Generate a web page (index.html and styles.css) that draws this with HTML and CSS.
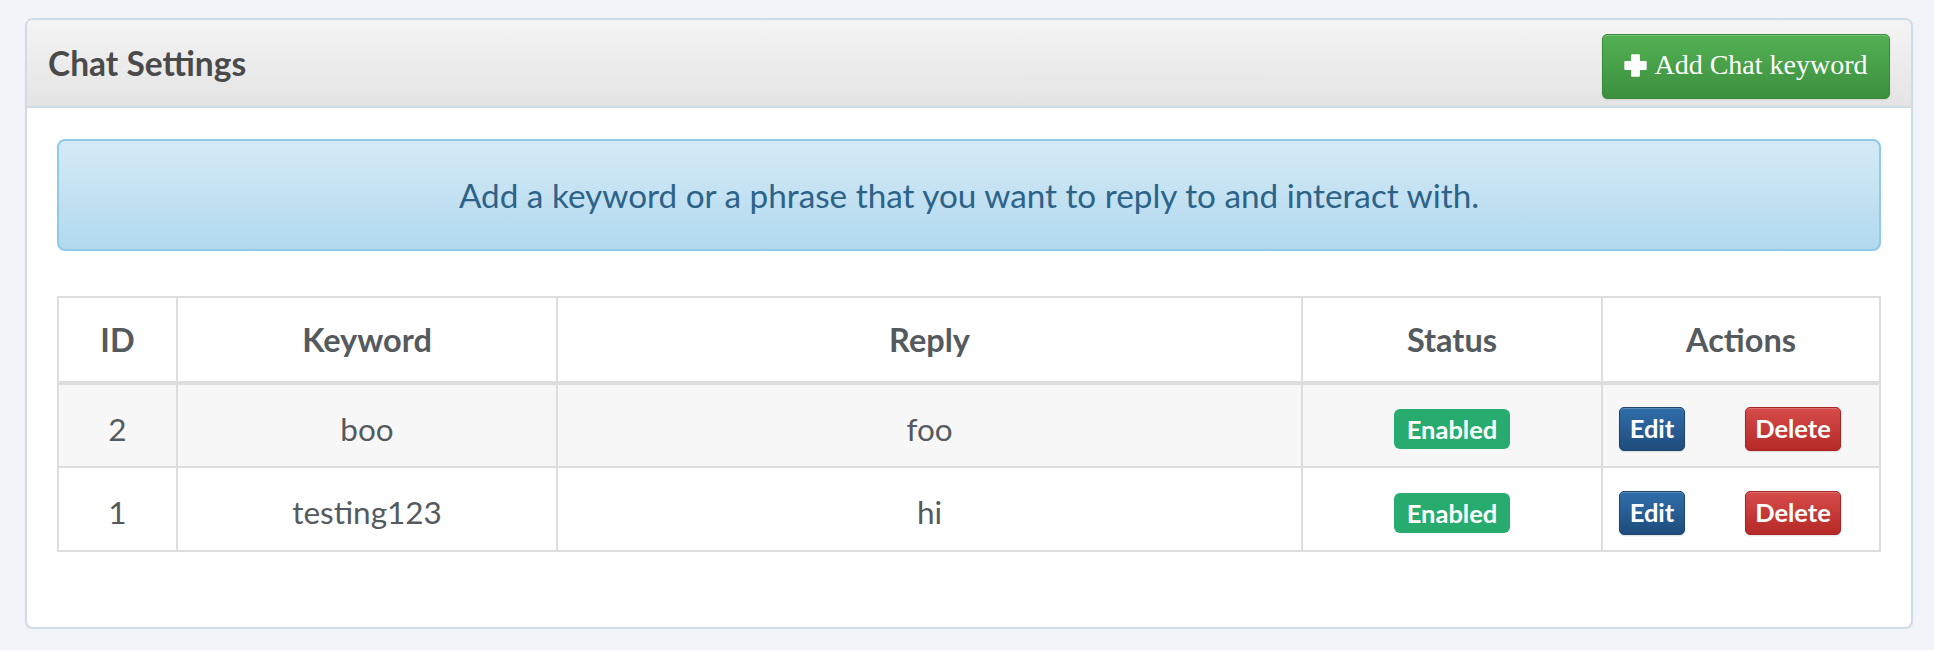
FILE: index.html
```html
<!DOCTYPE html>
<html lang="en">
<head>
<meta charset="utf-8">
<title>Chat Settings</title>
<link rel="stylesheet" href="styles.css">
</head>
<body>
<div class="panel">
  <div class="panel-header">
    <h2 class="panel-title">Chat Settings</h2>
    <button class="btn-add" type="button">
      <svg class="plus" viewBox="0 0 22 22" width="23" height="23" aria-hidden="true">
        <path d="M7.5 1h7v6.5H21v7h-6.5V21h-7v-6.5H1v-7h6.5z" fill="#fff" stroke="#fff" stroke-width="1.4" stroke-linejoin="round"/>
      </svg>
      <span>Add Chat keyword</span>
    </button>
  </div>
  <div class="panel-body">
    <div class="alert">Add a keyword or a phrase that you want to reply to and interact with.</div>
    <table class="kw-table">
      <thead>
        <tr>
          <th class="col-id">ID</th>
          <th class="col-kw">Keyword</th>
          <th class="col-reply">Reply</th>
          <th class="col-status">Status</th>
          <th class="col-actions">Actions</th>
        </tr>
      </thead>
      <tbody>
        <tr class="striped">
          <td>2</td>
          <td>boo</td>
          <td>foo</td>
          <td><span class="label-ok">Enabled</span></td>
          <td class="actions"><button class="btn btn-edit" type="button">Edit</button><button class="btn btn-delete" type="button">Delete</button></td>
        </tr>
        <tr>
          <td>1</td>
          <td>testing123</td>
          <td>hi</td>
          <td><span class="label-ok">Enabled</span></td>
          <td class="actions"><button class="btn btn-edit" type="button">Edit</button><button class="btn btn-delete" type="button">Delete</button></td>
        </tr>
      </tbody>
    </table>
  </div>
</div>
</body>
</html>
```
FILE: styles.css
```css
* { box-sizing: border-box; }

html, body {
  margin: 0;
  background: #f1f5f9;
}

body {
  padding: 18px 21px 0 25px;
  font-family: Lato, "Open Sans", "DejaVu Sans", sans-serif;
  color: #555;
}

.panel {
  background: #fff;
  border: 2px solid #cfdce8;
  border-radius: 8px;
  box-shadow: 0 2px 3px rgba(0, 0, 0, 0.04);
  height: 611px;
  overflow: hidden;
}

.panel-header {
  height: 88px;
  display: flex;
  align-items: center;
  justify-content: space-between;
  padding: 0 21px 0 21px;
  background: linear-gradient(#f4f4f4, #e4e4e4);
  border-bottom: 2px solid #cfdce8;
}

.panel-title {
  margin: 0;
  font-size: 33.5px;
  font-weight: 700;
  color: #4a4a4a;
}

.btn-add {
  margin-top: 7px;
  width: 288px;
  height: 65px;
  display: flex;
  align-items: center;
  justify-content: center;
  gap: 7px;
  padding: 0 0 4px 0;
  background: linear-gradient(#53b154, #3c8f3d);
  border: 1px solid #3b8a3c;
  border-radius: 5px;
  box-shadow: inset 0 1px 0 rgba(255, 255, 255, 0.2), 0 1px 2px rgba(0, 0, 0, 0.1);
  color: #fff;
  font-family: "Liberation Serif", "Times New Roman", serif;
  font-size: 28px;
}

.btn-add .plus {
  flex: none;
  margin-top: 1px;
}

.panel-body {
  padding: 31px 30px;
}

.alert {
  height: 112px;
  display: flex;
  align-items: center;
  justify-content: center;
  background: linear-gradient(#d4eaf6, #b2d9ee);
  border: 2px solid #8fcbe8;
  border-radius: 8px;
  color: #2d6388;
  font-size: 33.3px;
  margin-bottom: 45px;
}

.kw-table {
  width: 100%;
  border-collapse: collapse;
  border: 2px solid #dddddd;
  font-size: 31.5px;
  color: #555a5e;
}

.kw-table th,
.kw-table td {
  border: 2px solid #dddddd;
  text-align: center;
  vertical-align: middle;
  padding: 0;
}

.kw-table th {
  height: 86px;
  font-weight: 700;
  font-size: 32.5px;
  border-bottom-width: 4px;
}

.kw-table td {
  height: 84px;
  padding-top: 6px;
}

.col-id { width: 119px; }
.col-kw { width: 380px; }
.col-reply { width: 745px; }
.col-status { width: 300px; }

.striped td { background: #f7f7f7; }

.label-ok {
  display: inline-block;
  height: 40px;
  line-height: 40px;
  padding: 0 13px;
  border-radius: 6px;
  background: #27ab6e;
  color: #fff;
  font-size: 25.5px;
  font-weight: 700;
}

.kw-table td.actions {
  text-align: left;
  padding-left: 16px;
}

.btn {
  height: 44px;
  padding: 0 0 2px;
  border-radius: 5px;
  color: #fff;
  font-family: Lato, "Open Sans", sans-serif;
  font-size: 25.5px;
  font-weight: 700;
  vertical-align: middle;
  box-shadow: inset 0 1px 0 rgba(255, 255, 255, 0.2), 0 1px 2px rgba(0, 0, 0, 0.12);
}

.btn-edit {
  width: 66px;
  background: linear-gradient(#2f6eaa, #1f4c7c);
  border: 1px solid #1c4570;
  margin-right: 60px;
}

.btn-delete {
  width: 96px;
  background: linear-gradient(#d64c4a, #b52927);
  border: 1px solid #a82422;
}
```
